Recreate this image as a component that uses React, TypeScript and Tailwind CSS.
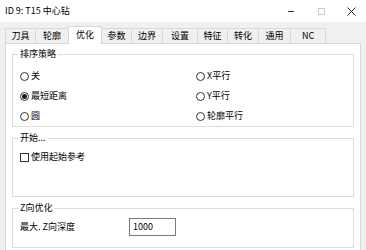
import React from "react";

const tabs = [
  { label: "刀具", w: 31 },
  { label: "轮廓", w: 33 },
  { label: "优化", w: 34, active: true },
  { label: "参数", w: 30 },
  { label: "边界", w: 31 },
  { label: "设置", w: 35 },
  { label: "特征", w: 30 },
  { label: "转化", w: 31 },
  { label: "通用", w: 32 },
  { label: "NC", w: 35 },
];

function Radio({ label, checked = false }: { label: string; checked?: boolean }) {
  return (
    <div className="flex items-center h-[20px]">
      <span className="w-[9px] h-[9px] rounded-full border border-[#333] bg-white flex items-center justify-center">
        {checked && <span className="w-[5px] h-[5px] rounded-full bg-[#1a1a1a]" />}
      </span>
      <span className="ml-[2px]">{label}</span>
    </div>
  );
}

function Group({ title, className, children }: { title: string; className?: string; children?: React.ReactNode }) {
  return (
    <fieldset className={`border border-[#dcdcdc] px-[7px] ${className ?? ""}`}>
      <legend className="ml-[-2px] px-[2px] leading-[12px]">{title}</legend>
      {children}
    </fieldset>
  );
}

export default function App() {
  return (
    <div className="w-[366px] h-[250px] overflow-hidden bg-[#f0f0f0] text-[9px] text-black font-['Noto_Sans_CJK_SC',sans-serif]">
      {/* title bar */}
      <div className="h-[22px] bg-white flex items-center pl-[5px]">
        <span className="leading-[12px]">ID 9: T15 中心钻</span>
        <div className="ml-auto flex items-center h-full">
          <span className="w-[6px] h-px bg-[#333] mr-[24px]" />
          <span className="w-[7px] h-[7px] border border-[#c8c8c8] mr-[22px]" />
          <svg width="9" height="9" viewBox="0 0 9 9" className="mr-[10px]">
            <path d="M0.5 0.5L8.5 8.5M8.5 0.5L0.5 8.5" stroke="#222" strokeWidth="1" />
          </svg>
        </div>
      </div>

      {/* tabs */}
      <div className="pt-[4px] px-[5px]">
        <div className="flex items-end h-[18px] mb-[-1px] relative z-10">
          {tabs.map((t, i) =>
            t.active ? (
              <div
                key={t.label}
                style={{ width: t.w }}
                className="h-[18px] -ml-px bg-white border-t border-l border-r border-[#d9d9d9] flex items-start justify-center pt-[2px] leading-[12px]"
              >
                {t.label}
              </div>
            ) : (
              <div
                key={t.label}
                style={{ width: t.w }}
                className={`h-[16px] bg-[#f0f0f0] border-t border-r border-b border-[#d9d9d9] flex items-center justify-center leading-[12px] ${
                  i === 0 ? "border-l" : ""
                }`}
              >
                {t.label}
              </div>
            )
          )}
        </div>

        {/* panel */}
        <div className="bg-white border border-[#d9d9d9] h-[220px] px-[6px] pt-[4px]">
          <Group title="排序策略" className="pt-[6px] h-[79px]">
            <div className="grid grid-cols-[176px_1fr]">
              <div>
                <Radio label="关" />
                <Radio label="最短距离" checked />
                <Radio label="圆" />
              </div>
              <div>
                <Radio label="X平行" />
                <Radio label="Y平行" />
                <Radio label="轮廓平行" />
              </div>
            </div>
          </Group>

          <Group title="开始..." className="mt-[5px] h-[65px] pt-[6px]">
            <div className="flex items-center h-[14px]">
              <span className="w-[9px] h-[9px] border border-[#333] bg-white" />
              <span className="ml-[2px]">使用起始参考</span>
            </div>
          </Group>

          <Group title="Z向优化" className="mt-[5px] h-[46px] pt-[4px]">
            <div className="flex items-center h-[18px]">
              <span className="w-[109px]">最大. Z向深度</span>
              <div className="w-[47px] h-[18px] border border-[#7a7a7a] flex items-center pl-[3px]">1000</div>
            </div>
          </Group>
        </div>
      </div>
    </div>
  );
}
